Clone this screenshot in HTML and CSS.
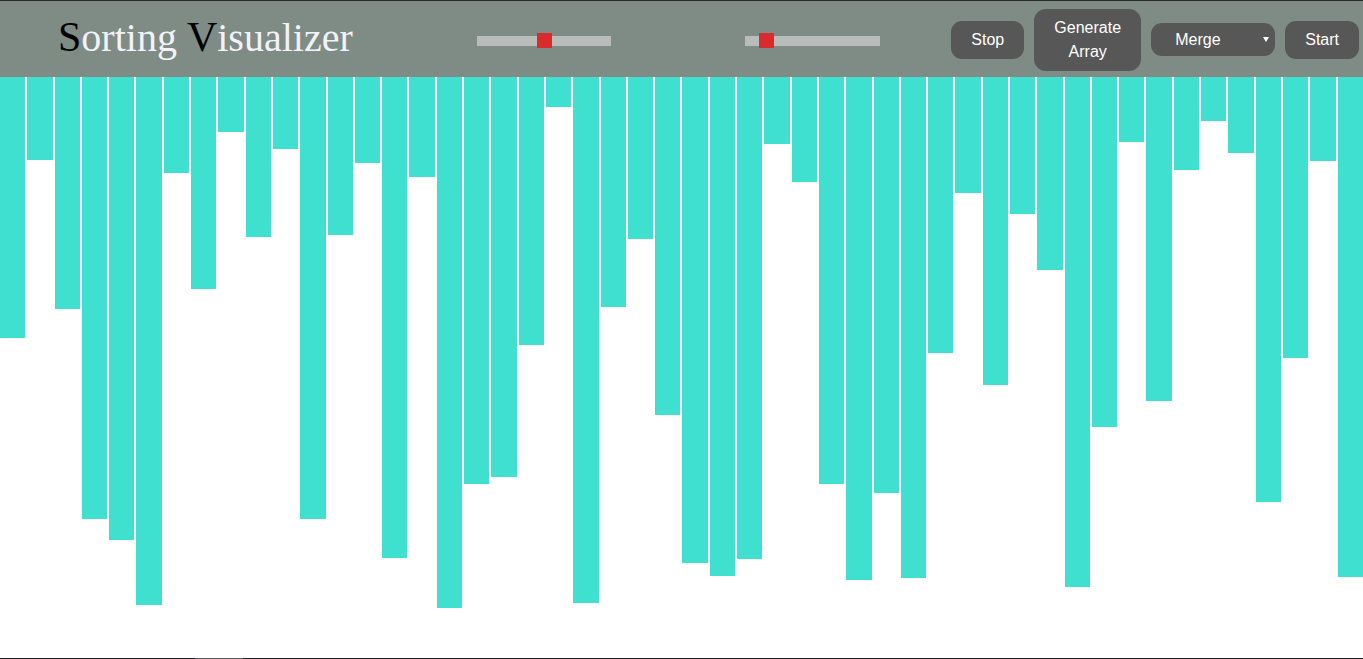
FILE: index.html
```html
<!DOCTYPE html>
<html lang="en">
<head>
<meta charset="utf-8">
<title>Sorting Visualizer</title>
<link rel="stylesheet" href="styles.css">
</head>
<body>
<header class="topbar">
  <h1 class="title"><span class="cap">S</span>orting <span class="cap">V</span>isualizer</h1>
  <input class="slider slider-size" type="range" min="0" max="100" value="50" aria-label="Array size">
  <input class="slider slider-speed" type="range" min="0" max="100" value="12" aria-label="Speed">
  <div class="controls">
    <button class="btn">Stop</button>
    <button class="btn btn-wide">Generate Array</button>
    <div class="select-wrap">
      <select class="algo" aria-label="Algorithm">
        <option>Merge</option>
        <option>Quick</option>
        <option>Heap</option>
        <option>Bubble</option>
      </select>
    </div>
    <button class="btn">Start</button>
  </div>
</header>
<main class="bars">
  <div class="bar" style="height:261px"></div>
  <div class="bar" style="height:83px"></div>
  <div class="bar" style="height:232px"></div>
  <div class="bar" style="height:442px"></div>
  <div class="bar" style="height:463px"></div>
  <div class="bar" style="height:528px"></div>
  <div class="bar" style="height:96px"></div>
  <div class="bar" style="height:212px"></div>
  <div class="bar" style="height:55px"></div>
  <div class="bar" style="height:160px"></div>
  <div class="bar" style="height:72px"></div>
  <div class="bar" style="height:442px"></div>
  <div class="bar" style="height:158px"></div>
  <div class="bar" style="height:86px"></div>
  <div class="bar" style="height:481px"></div>
  <div class="bar" style="height:100px"></div>
  <div class="bar" style="height:531px"></div>
  <div class="bar" style="height:407px"></div>
  <div class="bar" style="height:400px"></div>
  <div class="bar" style="height:268px"></div>
  <div class="bar" style="height:30px"></div>
  <div class="bar" style="height:526px"></div>
  <div class="bar" style="height:230px"></div>
  <div class="bar" style="height:162px"></div>
  <div class="bar" style="height:338px"></div>
  <div class="bar" style="height:486px"></div>
  <div class="bar" style="height:499px"></div>
  <div class="bar" style="height:482px"></div>
  <div class="bar" style="height:67px"></div>
  <div class="bar" style="height:105px"></div>
  <div class="bar" style="height:407px"></div>
  <div class="bar" style="height:503px"></div>
  <div class="bar" style="height:416px"></div>
  <div class="bar" style="height:501px"></div>
  <div class="bar" style="height:276px"></div>
  <div class="bar" style="height:116px"></div>
  <div class="bar" style="height:308px"></div>
  <div class="bar" style="height:137px"></div>
  <div class="bar" style="height:193px"></div>
  <div class="bar" style="height:510px"></div>
  <div class="bar" style="height:350px"></div>
  <div class="bar" style="height:65px"></div>
  <div class="bar" style="height:324px"></div>
  <div class="bar" style="height:93px"></div>
  <div class="bar" style="height:44px"></div>
  <div class="bar" style="height:76px"></div>
  <div class="bar" style="height:425px"></div>
  <div class="bar" style="height:281px"></div>
  <div class="bar" style="height:84px"></div>
  <div class="bar" style="height:500px"></div>
</main>
<div class="scrollbar"><div class="scroll-thumb"></div></div>
</body>
</html>
```
FILE: styles.css
```css
* { box-sizing: border-box; }

html, body {
  margin: 0;
  padding: 0;
  height: 100%;
  overflow: hidden;
}

body {
  display: flex;
  flex-direction: column;
  background: #ffffff;
  font-family: "Liberation Sans", Arial, sans-serif;
}

.topbar {
  flex: none;
  height: 77px;
  display: flex;
  align-items: center;
  background: #7f8b85;
  border-top: 1px solid #2b2b2b;
  padding-left: 58px;
  padding-right: 4px;
}

.title {
  flex: none;
  width: 419px;
  margin: 0 0 4px 0;
  font-family: "Liberation Serif", "Times New Roman", serif;
  font-weight: normal;
  font-size: 40px;
  line-height: 1;
  color: #f2f2fa;
  white-space: nowrap;
}

.cap { color: #000000; font-size: 42px; }

.slider {
  -webkit-appearance: none;
  appearance: none;
  flex: none;
  margin: 3px 0 0 0;
  padding: 0;
  height: 15px;
  background: transparent;
}

.slider-size { width: 134px; }
.slider-speed { width: 135px; margin-left: 134px; }

.slider::-webkit-slider-runnable-track {
  height: 10px;
  background: #b9bcba;
  border: none;
}

.slider::-webkit-slider-thumb {
  -webkit-appearance: none;
  appearance: none;
  width: 15px;
  height: 15px;
  margin-top: -2.5px;
  background: #d92b2b;
  border: none;
  border-radius: 0;
}

.controls {
  margin-left: auto;
  display: flex;
  align-items: center;
  gap: 10px;
  margin-top: 1px;
}

.btn {
  font-family: "Liberation Sans", Arial, sans-serif;
  font-size: 16px;
  line-height: 24px;
  color: #ffffff;
  background: #575757;
  border: none;
  border-radius: 11px;
  padding: 7px 20px;
  cursor: pointer;
}

.btn-wide {
  width: 107px;
  padding: 7px 10px;
  border-radius: 12px;
}

.select-wrap {
  position: relative;
}

.algo {
  -webkit-appearance: none;
  appearance: none;
  width: 124px;
  height: 33px;
  padding: 0 0 0 24px;
  font-family: "Liberation Sans", Arial, sans-serif;
  font-size: 16px;
  color: #ffffff;
  background: #575757;
  border: none;
  border-radius: 11px;
  text-align: left;
}

.select-wrap::after {
  content: "";
  position: absolute;
  right: 6px;
  top: 14px;
  border-left: 3px solid transparent;
  border-right: 3px solid transparent;
  border-top: 5px solid #ffffff;
  pointer-events: none;
}

.bars {
  flex: 1;
  display: flex;
  align-items: flex-start;
  gap: 2px;
}

.bar {
  flex: 1 1 0;
  background: #40e0d0;
}

.scrollbar {
  flex: none;
  height: 1px;
  background: #1e1e22;
  position: relative;
}

.scroll-thumb {
  margin-left: 195px;
  width: 48px;
  height: 1px;
  background: #5a5a5a;
}
```
